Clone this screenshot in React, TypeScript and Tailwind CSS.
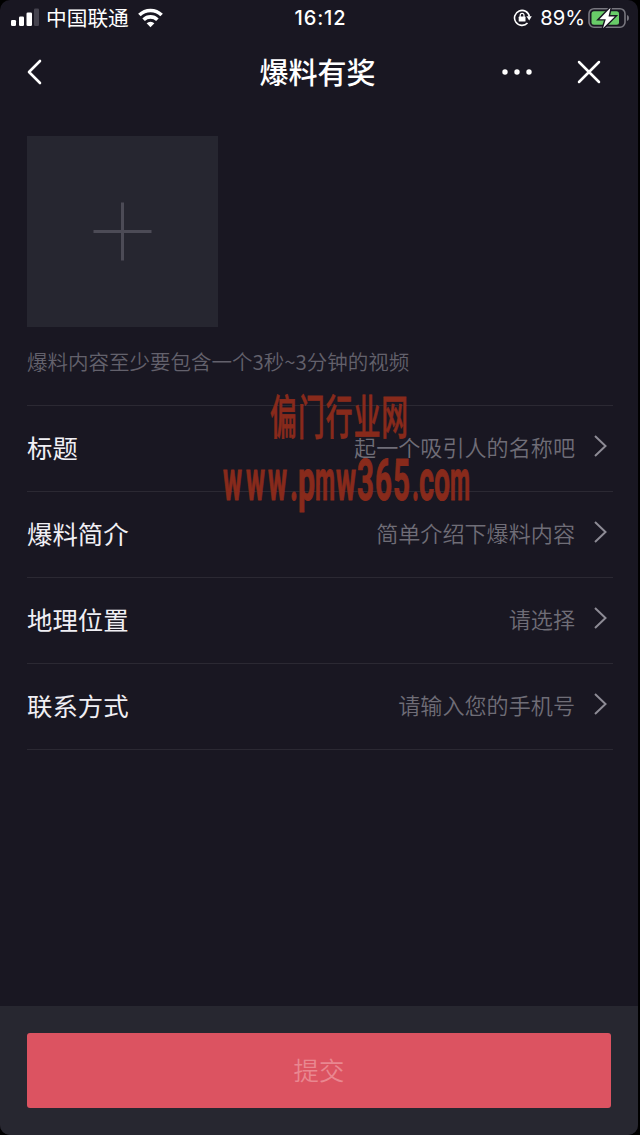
type Row = { label: string; hint: string };

const rows: Row[] = [
  { label: '标题', hint: '起一个吸引人的名称吧' },
  { label: '爆料简介', hint: '简单介绍下爆料内容' },
  { label: '地理位置', hint: '请选择' },
  { label: '联系方式', hint: '请输入您的手机号' },
];

// [character, left edge, drawn width]
const urlGlyphs: [string, number, number][] = [
  ['w', 0, 19], ['w', 23, 19], ['w', 45, 19], ['.', 67, 8], ['p', 75, 17],
  ['m', 92, 20], ['w', 113, 20], ['3', 134, 17], ['6', 152, 17], ['5', 170, 17],
  ['.', 189, 7], ['c', 196, 15], ['o', 211, 16], ['m', 227, 20],
];

function StatusBar() {
  return (
    <div className="flex h-[35px] items-center justify-between pl-[11px] pr-[8px]">
      <div className="flex flex-1 items-center">
        <svg width="29" height="19" viewBox="0 0 29 19" fill="#fff">
          <rect x="0" y="12" width="5" height="6" rx="1.3" />
          <rect x="8" y="8.5" width="5" height="9.5" rx="1.3" />
          <rect x="15.5" y="4.5" width="5.5" height="13.5" rx="1.3" />
          <rect x="23" y="0.5" width="5" height="17.5" rx="1.3" fill="#45434e" />
        </svg>
        <span className="ml-[6px] whitespace-nowrap text-[20.7px] leading-[35px]">中国联通</span>
        <svg className="ml-[8px] shrink-0" width="27" height="20" viewBox="0 0 27 20" fill="none" stroke="#fff" strokeWidth="3.6">
          <path d="M2.4 7.1A15.7 15.7 0 0 1 24.6 7.1" />
          <path d="M6.6 11.7A9.8 9.8 0 0 1 20.4 11.7" />
          <path d="M9.6 15.2A5.7 5.7 0 0 1 17.4 15.2L13.5 19.2Z" fill="#fff" stroke="none" />
        </svg>
      </div>
      <div className="pt-px text-center font-[Inter] text-[20px] font-medium leading-[35px] tracking-[0.9px]">16:12</div>
      <div className="flex flex-1 items-center justify-end">
        <svg width="19" height="19" viewBox="0 0 19 19" fill="none" stroke="#fff" strokeWidth="1.6">
          <path d="M16.4 8.5A7.5 7.5 0 1 0 14.5 15" />
          <path d="M13.4 8.3h5.4L16.2 12.6z" fill="#fff" stroke="none" />
          <rect x="5.7" y="8.6" width="6.8" height="5" rx=".6" fill="#fff" stroke="none" />
          <path d="M7.2 9V7.2a1.9 1.9 0 0 1 3.8 0V9" strokeWidth="1.2" />
        </svg>
        <span className="ml-[8px] mr-[3px] font-[Inter] text-[20.2px] leading-[35px]">89%</span>
        <svg width="42" height="22" viewBox="0 0 42 22">
          <rect x="1" y="1.7" width="36" height="18.5" rx="5" fill="none" stroke="#77767e" strokeWidth="1.6" />
          <path d="M39 8v6q2-.7 2-3t-2-3z" fill="#77767e" />
          <rect x="3.5" y="4.2" width="27.5" height="13.5" rx="2.5" fill="#68cc68" />
          <path d="M22.5 .8 11.4 12.2h6.4L15 21.2 26.8 9.4h-6.3z" fill="#fff" stroke="#191722" strokeWidth="2.8" paintOrder="stroke" />
        </svg>
      </div>
    </div>
  );
}

function NavBar() {
  return (
    <div className="grid h-[73px] grid-cols-3 items-center pl-[27px] pr-[36px]">
      <svg width="16" height="26" viewBox="0 0 16 26" fill="none" stroke="#fff" strokeWidth="2.6" strokeLinecap="round" strokeLinejoin="round">
        <path d="M13 2 2 13l11 11" />
      </svg>
      <h1 className="-mr-[6px] whitespace-nowrap text-center text-[29px] font-medium leading-[71px]">爆料有奖</h1>
      <div className="flex items-center justify-end">
        <svg width="32" height="8" viewBox="0 0 32 8" fill="#fff">
          <circle cx="4" cy="4" r="2.7" /><circle cx="16" cy="4" r="2.7" /><circle cx="28" cy="4" r="2.7" />
        </svg>
        <svg className="ml-[43px]" width="26" height="26" viewBox="0 0 26 26" stroke="#fff" strokeWidth="2.5" strokeLinecap="round">
          <path d="m3 3 20 20M23 3 3 23" />
        </svg>
      </div>
    </div>
  );
}

function Watermark() {
  return (
    <svg className="pointer-events-none absolute left-[223px] top-[384px]" width="260" height="136" viewBox="0 0 260 136" fill="#882a1b" stroke="#882a1b">
      <g transform="translate(47 50) scale(.57 1)" strokeWidth=".8" className="font-['Noto_Sans_CJK_SC',sans-serif] text-[47px] font-medium">
        <text x="0 49 98 147 195" y="0">偏门行业网</text>
      </g>
      <g strokeWidth="1.1" className="font-[Roboto,sans-serif] text-[57px] font-bold">
        {urlGlyphs.map(([char, x, width], i) => (
          <text key={i} x={x} y="116" textLength={width} lengthAdjust="spacingAndGlyphs">{char}</text>
        ))}
      </g>
    </svg>
  );
}

export default function App() {
  return (
    <div className="h-[1135px] w-[640px] bg-black pr-[2px] font-['Noto_Sans_CJK_SC',sans-serif] text-white">
      <div className="relative flex h-full flex-col overflow-hidden rounded-[10px] bg-[#191722]">
        <StatusBar />
        <NavBar />
        <main className="flex-1 pl-[27px] pr-[25px] pt-[28px]">
          <button className="flex size-[191px] items-center justify-center bg-[#262630]" aria-label="添加视频">
            <svg width="59" height="59" viewBox="0 0 59 59" stroke="#4c4b56" strokeWidth="3">
              <path d="M29.5 .5v58M.5 29.5h58" />
            </svg>
          </button>
          <p className="mt-[19px] h-[59px] whitespace-nowrap text-[20.5px] font-[350] leading-[30px] text-[#63616c]">爆料内容至少要包含一个3秒~3分钟的视频</p>
          <div className="border-b border-[#2b2933]">
            {rows.map((row) => (
              <div key={row.label} className="flex h-[86px] items-center border-t border-[#2b2933]">
                <span className="-mt-[2px] text-[25.4px] text-[#f0eff4]">{row.label}</span>
                <span className="-mt-[4px] ml-auto text-[22.1px] font-[350] text-[#6f6d77]">{row.hint}</span>
                <svg className="-mt-[5px] ml-[18px] mr-[5px]" width="15" height="24" viewBox="0 0 15 24" fill="none" stroke="#8d8b95" strokeWidth="2">
                  <path d="m2 2 10.5 10L2 22" />
                </svg>
              </div>
            ))}
          </div>
        </main>
        <footer className="h-[129px] bg-[#272730] pl-[27px] pr-[27px] pt-[27px]">
          <button className="h-[75px] w-full rounded-[3px] bg-[#dc5361] pb-[2px] text-[25.4px] font-[350] text-[#e98790]">提交</button>
        </footer>
        <Watermark />
      </div>
    </div>
  );
}
